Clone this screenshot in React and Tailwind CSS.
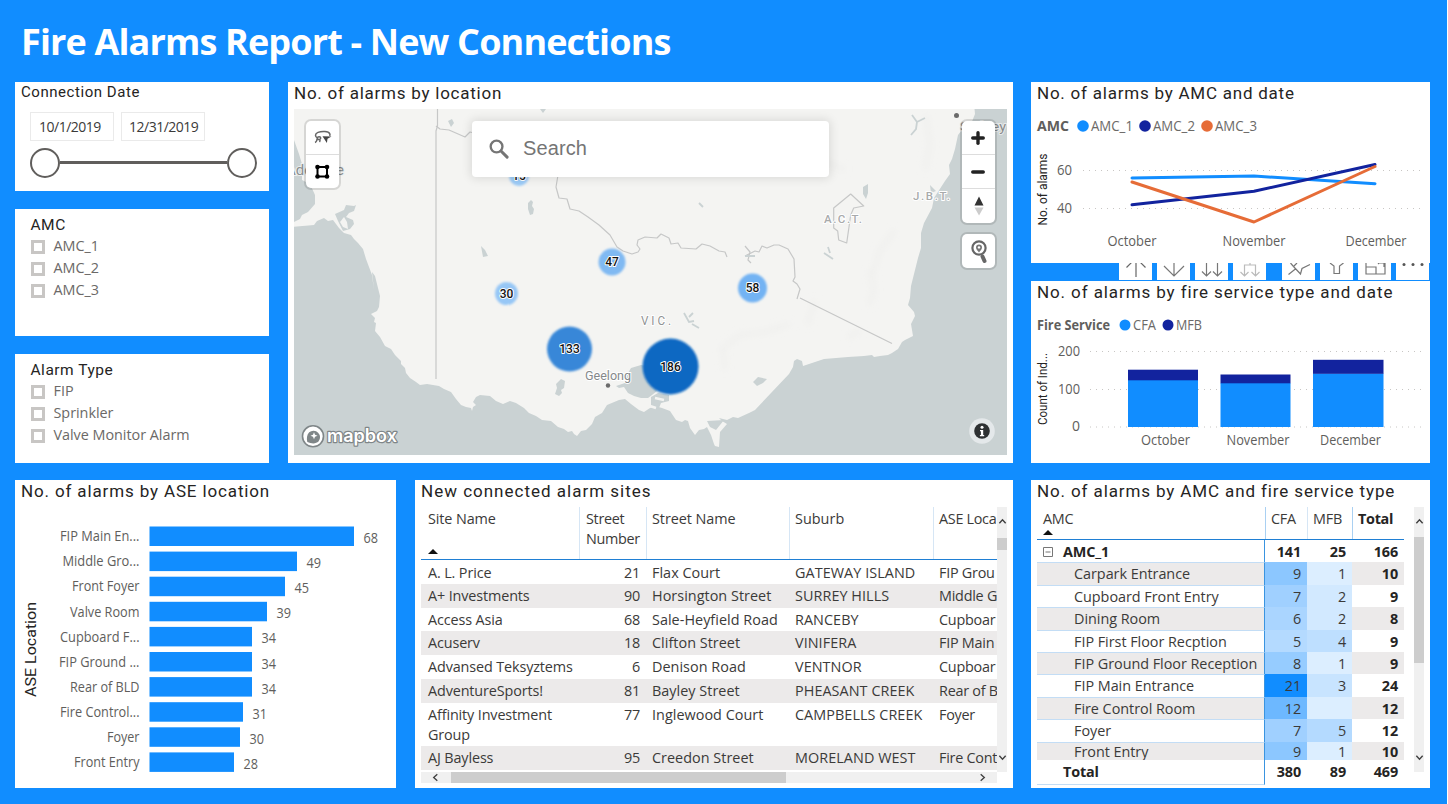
import React from "react";
import { Plus, Minus } from "lucide-react";

const UI = "font-['Open_Sans','Noto_Sans',sans-serif]";
const DIN = "font-[Roboto,sans-serif]";

// Text inside a drawing, fitted to width w when given
function T({ x, y, w, size = 14, fill = "#605e5c", anchor = "start", din, className = "", children, ...rest }) {
  return (
    <text
      x={x}
      y={y}
      fontSize={size}
      fill={fill}
      textAnchor={anchor}
      textLength={w}
      lengthAdjust="spacingAndGlyphs"
      className={`${din ? DIN : UI} ${className}`}
      {...rest}
    >
      {children}
    </text>
  );
}

function Panel({ className = "", children }) {
  return <section className={`bg-white overflow-hidden shrink-0 ${className}`}>{children}</section>;
}

function Title({ className = "", children }) {
  return (
    <h2 className={`${DIN} text-[17px] leading-[22px] text-[#252423] whitespace-nowrap pl-1.5 ${className}`}>
      {children}
    </h2>
  );
}

function CheckList({ title, items }) {
  return (
    <div className="pl-[15.500px] pt-[5px]">
      <h3 className={`${DIN} text-[15.5px] leading-[22px] tracking-[0.5px] text-[#252423]`}>{title}</h3>
      {items.map((t) => (
        <label key={t} className="flex items-center gap-[9px] h-[22px]">
          <span className="size-[14px] border-[3px] border-[#c8c6c4] bg-white" />
          <span className={`${UI} text-[14.4px] tracking-[-0.03px] text-[#6b6967] leading-none`}>{t}</span>
        </label>
      ))}
    </div>
  );
}

function DateSlicer() {
  return (
    <>
      <h2 className={`${DIN} text-[15px] leading-[20px] tracking-[0.55px] text-[#252423] pl-1.5`}>Connection Date</h2>
      <div className={`${UI} flex gap-[7px] pl-[15px] pt-[10px] text-[14px] text-[#3b3a39] tracking-[-0.5px]`}>
        <span className="w-[84px] h-[29px] border border-[#eaeaea] flex items-center pl-[8px]">10/1/2019</span>
        <span className="w-[84px] h-[29px] border border-[#eaeaea] flex items-center pl-[7px]">12/31/2019</span>
      </div>
      <div className="flex items-center pl-[15px] pt-[7px]">
        <span className="size-[30px] rounded-full border-2 border-[#605e5c]" />
        <span className="w-[167px] h-[3px] bg-[#605e5c]" />
        <span className="size-[30px] rounded-full border-2 border-[#605e5c]" />
      </div>
    </>
  );
}

const clusters = [
  { x: 519, y: 176, r: 10, c: "#9ccbf7", n: "15" },
  { x: 612, y: 262, r: 13.5, c: "#80b9f2", n: "47" },
  { x: 506.5, y: 293.5, r: 11.5, c: "#97c7f6", n: "30" },
  { x: 752.5, y: 288, r: 14.5, c: "#73b3f3", n: "58" },
  { x: 569.5, y: 349, r: 22.5, c: "#3787d8", n: "133" },
  { x: 670.5, y: 366.5, r: 28, c: "#0c68c2", n: "186" },
];

function MapDrawing() {
  return (
    <svg viewBox="294 109 713 346" className="block w-[713px] h-[346px]">
      <defs>
        <filter id="soft" x="-30%" y="-30%" width="160%" height="160%">
          <feGaussianBlur stdDeviation="1.2" />
        </filter>
        <filter id="relief" x="-50%" y="-50%" width="200%" height="200%">
          <feGaussianBlur stdDeviation="3" />
        </filter>
      </defs>
      <rect x="294" y="109" width="713" height="346" fill="#f4f4f2" />
      <g fill="none" stroke="#efefed" strokeWidth="4" filter="url(#relief)">
        <path d="M720 350l20-15 25-3 25-8M815 300l-8 25M860 330l-12 8M870 270l4 20-5 15M895 230l-15 20-8 25M725 370l-2-20M925 170l5-25-4-30M800 150l45 20" />
      </g>
      <g fill="#cad2d3">
        <path d="M294 226.700L314 225l3-4 7-3 4 3 5-1 6 8 5 5 7 2 3 4 4 4 5 6 3 10 6 16 2 15-2-18 3 4 4 16 1 4-1 11-2 4-6 3 4 4-1 4 2 1-1 8 5 6 5 9 6 3 4 6 6 6 0 3 4 4 1 5 4 5 6 4 4 3 7-1 12 2 5 3 7 3 5 7 5 6 5 2 5 1 1 3 1-4 3-2-3-3 3-5 4-2 10 1 6 5 7 3 7-3 6 2 8 5 5 5 7 3 6 4 9 1 7 6 6 2 4 3 4-1 2 3 3 2 4-5 5-1 6-6 3-7 7-4 5-8 12-5 6-1 6 5 8 6 5 2 6-4 5-2 7 2 8 3 6 9 6 2 3-2 3 1 2 7 5 7 4-5 5-1 3-2 4 8 3 9 1 2 4 1 1-15 7-8-5-3-3-3 8 2 6-3 5 1 11-5 6-3 34-36 4-7 1-6 3-2 5 2 1 5 21-7 12-1 12-1 16-1 8-1 2 2 6-1 8-1 4-2 6-4 4-7 3-2 6-3 2-1-2-12 4-8-1-4-6-7 2-7 1-12 4-16 3-12 3-10 0-15 3-10 8-15 2-10 11-17 5-7-1-9 3-6 3-10 3-14 7-9 6-2 4-10-1-11H1007V455H294Z" />
        <path d="M294 140l5 14 3 10 0 16 8 4 5 11 0 9-7 8-6 3-2 4-6 3Z" />
        <path d="M335 214l9-4 2-5 8 1 2-1-2 6-5 2-3 4 7 3 1 4-4 5-7 2-5-10Z" />
        <path d="M616 386l9-3 2-8 4-7 10-3 6 1 4 8 6 17-5 4-4 3-7 0-7-2-6-3-4-6-5 1Z" />
        <path d="M651 397l7-4 11 2 0 6-8 2-2 5-8-1Z" />
        <path d="M753 382l5-5 9 2-4 4-6 3ZM707 421l17-1-8 10-6-3ZM931 193l-1-8 6 6Z" />
        <path d="M556 384l5-5 4 2-1 7-3 2 1 3-3 3-4-2 2-6ZM528 203l3-3 2 2-1 4 2 3-1 5-3 1-2-6ZM481 246l4 4 3 6-5 1ZM448 121l4-2 2 4-3 4ZM540 109h6l-3 4ZM863 187l5-3 0 9-2 6-3-5Z" />
      </g>
      <path d="M340 222l4-5 3 5 1 7-5-2Z" fill="#f4f4f2" />
      <path d="M655 398l9 2M650 406l6 2" stroke="#f4f4f2" strokeWidth="2.500" fill="none" />
      <g fill="none" stroke="#c6c7c7" strokeWidth="1.200" strokeLinejoin="round">
        <path d="M437.500 109v17l-1.500 5V379" />
        <path d="M436 126l4 3 9 1 16 7 5-5 4 1 10-3M558 175l-2 12 3 11 8 1 3 10 9 2 9 6 11 8 11 10 7 12 6 4 9 3 6-2 2-3-3-4 1-5 7-3 12 1 4-4 8 4 2 6 7-1 3 5 15 1 6-5 8 2 9 5 6 1 2 5M745 256l10-5 4 1 3-6 5 2 7-3 5 0 9 4 6 10 1 18-2 4 4 3 3 5-3 10" />
        <path d="M800 298L892 343.500M745 246l5 6-2 8 3 3M850.700 194l13 12-10 2-3 7-4 28-8-3-1-9-4-3 0-20Z" />
      </g>
      <g fill="none" stroke="#cad2d3" strokeWidth="1.800">
        <path d="M912 115l5 7-1 7-5 6M917 122l8-4M824 253l9 6M828 247l2 6M684 313l5 9 5-1M689 317l4-4M692 324l7 4M699 203l4 4M745 256h10" />
      </g>
      <g>
        <T din x={286} y={175} w={58} size={14} fill="#8b8f91" stroke="#eef0ef" strokeWidth="2" paintOrder="stroke">Adelaide</T>
        <T din x={960} y={131} w={46} size={13.5} fill="#86898b" stroke="#e6e9e9" strokeWidth="2" paintOrder="stroke">Sydney</T>
        <T din x={585} y={380} w={46} size={13} fill="#85898b" stroke="#fff" strokeWidth="2" paintOrder="stroke">Geelong</T>
        <T din x={641} y={325} w={30} size={13} fill="#8f9293" stroke="#fff" strokeWidth="2" paintOrder="stroke">V I C .</T>
        <g fill="#a8aaab" stroke="#fff" strokeWidth="2" paintOrder="stroke" fontSize="11.500" className={`${DIN} font-medium`}>
          <text x="824" y="223" textLength="38">A.C.T.</text>
          <text x="913" y="200" textLength="37">J.B.T.</text>
        </g>
      </g>
      <circle cx="956.500" cy="115.500" r="2.500" fill="#6b6b6b" />
      <circle cx="608" cy="385.500" r="2.200" fill="#6b6b6b" />
      {clusters.map((c) => (
        <g key={c.n}>
          <circle cx={c.x} cy={c.y} r={c.r} fill={c.c} filter="url(#soft)" />
          <T din x={c.x} y={c.y + 4.4} size={12.5} w={c.n.length * 6.8} anchor="middle" fill="#111" stroke="#fff" strokeWidth="2" strokeLinejoin="round" paintOrder="stroke" className="font-medium">
            {c.n}
          </T>
        </g>
      ))}
      <g>
        <circle cx="313" cy="436.300" r="10.500" fill="#fff" stroke="#7f8688" strokeWidth="1.600" />
        <path d="M307.300 442c-.8-3.500-.5-7.400 1.900-9.700a6.600 6.600 0 0 1 9.300 9.300c-2.400 2.400-7.200 2.200-11.200.4Z" fill="#7f8688" />
        <path d="M314 432.200l1 2.500 2.500 1-2.500 1-1 2.500-1-2.500-2.500-1 2.500-1Z" fill="#fff" />
        <text x="327" y="441.500" fontSize="18" fontWeight="600" fill="#fff" stroke="#7f8688" strokeWidth="2.400" strokeLinejoin="round" paintOrder="stroke" textLength="70" lengthAdjust="spacingAndGlyphs" className="font-[Inter,sans-serif]">
          mapbox
        </text>
      </g>
    </svg>
  );
}

const ctl = "absolute bg-white rounded-[5px] shadow-[0_0_0_2px_rgba(0,0,0,0.12)] flex flex-col";

function MapPanel() {
  return (
    <Panel className="w-[725px] h-[381px]">
      <Title className="h-[27px] tracking-[0.76px]">No. of alarms by location</Title>
      <div className="relative ml-1.5 w-[713px] h-[346px] overflow-hidden">
        <MapDrawing />
        <div className={`${ctl} left-[11.5px] top-[12.5px] w-[33px] h-[67px]`}>
          <svg viewBox="0 0 33 33" className="h-[34px] border-b border-[#ddd]">
            <g fill="none" stroke="#666" strokeWidth="1.500">
              <path d="M11.500 17c-2.500-1-3-4.300.5-5.600 4-1.500 10.500-1.200 11.700 1.200.4.900.4 1.700 0 2.400M9 21.500c1.500-.5 2-2.200 2.300-4.500.4-1.800 3.400-1.500 3.400 0 0 1.300-1.800 2-3.400 1M13.500 18.500c.8 1 .5 2 0 2.500" />
            </g>
            <path d="M16.500 15.300l9 .2-4 2.300-.6 4.200Z" fill="#444" />
          </svg>
          <svg viewBox="0 0 33 33" className="h-[33px]">
            <rect x="11.500" y="12" width="9.500" height="9.500" fill="none" stroke="#000" strokeWidth="2" />
            <g fill="#000">
              <circle cx="11.500" cy="12" r="2.300" />
              <circle cx="21" cy="12" r="2.300" />
              <circle cx="11.500" cy="21.500" r="2.300" />
              <circle cx="21" cy="21.500" r="2.300" />
            </g>
          </svg>
        </div>
        <div className="absolute left-[178px] top-[12px] w-[357px] h-[56px] bg-white rounded shadow-[0_0_10px_2px_rgba(0,0,0,0.1)] flex items-center">
          <svg viewBox="0 0 18 18" className="size-[20px] ml-[17px] text-[#757575]">
            <circle cx="6.800" cy="6.800" r="5.300" fill="none" stroke="currentColor" strokeWidth="2.100" />
            <path d="M10.800 10.800l5.500 5.500" stroke="currentColor" strokeWidth="2.700" strokeLinecap="round" />
          </svg>
          <span className="ml-[14px] pb-[2px] font-['Liberation_Sans',sans-serif] text-[20px] tracking-[0.1px] text-[#757575]">Search</span>
        </div>
        <div className={`${ctl} left-[667.5px] top-[12.5px] w-[33px] h-[102px]`}>
          <span className="h-[34px] border-b border-[#ddd] flex items-center justify-center">
            <Plus size={18} strokeWidth={4.5} className="text-[#222]" />
          </span>
          <span className="h-[34px] border-b border-[#ddd] flex items-center justify-center">
            <Minus size={18} strokeWidth={4.5} className="text-[#222]" />
          </span>
          <svg viewBox="0 0 33 34" className="h-[34px]">
            <path d="M12.500 16.500l4.500-9 4.500 9Z" fill="#333" />
            <path d="M12.500 18.500l4.500 8 4.500-8Z" fill="#ccc" />
          </svg>
        </div>
        <div className={`${ctl} left-[667.5px] top-[125px] w-[33px] h-[34px]`}>
          <svg viewBox="0 0 33 34" className="h-[34px]">
            <circle cx="17" cy="14" r="6.600" fill="none" stroke="#666" strokeWidth="2.200" />
            <path d="M20.500 22.500l2 4.500" stroke="#666" strokeWidth="4" strokeLinecap="round" />
            <path d="M17 18.500c-1.500-2-3-3.300-3-5a3 3 0 0 1 6 0c0 1.700-1.500 3-3 5Z" fill="#777" />
            <circle cx="17" cy="13.400" r="1.200" fill="#fff" />
          </svg>
        </div>
        <svg viewBox="0 0 26 26" className="absolute left-[674.500px] top-[309px] size-[26px]">
          <circle cx="13" cy="13" r="12.800" fill="#e4e8ea" />
          <circle cx="13" cy="13" r="7.800" fill="#2e3133" />
          <circle cx="13" cy="9.300" r="1.500" fill="#fff" />
          <path d="M11 12h3.200v5h1v1.300h-4.300v-1.300h1v-3.700H11Z" fill="#fff" />
        </svg>
      </div>
    </Panel>
  );
}

const dots = { stroke: "#c8c6c4", strokeWidth: 1, strokeDasharray: "1 5" };

function LineChart() {
  return (
    <svg viewBox="1031 104 399 159" className="block w-[399px] h-[159px]">
      <T x={1037} y={131} w={32} size={13.5} className="font-bold">AMC</T>
      <circle cx="1083" cy="126" r="5.800" fill="#118dff" />
      <T x={1091} y={131} w={42} fill="#6b6967">AMC_1</T>
      <circle cx="1145" cy="126" r="5.800" fill="#12239e" />
      <T x={1153} y={131} w={42} fill="#6b6967">AMC_2</T>
      <circle cx="1207" cy="126" r="5.800" fill="#e66c37" />
      <T x={1215} y={131} w={42} fill="#6b6967">AMC_3</T>
      <T din size={12} w={72} fill="#252423" anchor="middle" transform="translate(1047 189.500) rotate(-90)">No. of alarms</T>
      <T x={1057} y={175} w={15}>60</T>
      <T x={1057} y={213} w={15}>40</T>
      <path d="M1083 170.500H1424M1083 208.500H1424" {...dots} />
      <g fill="none" strokeWidth="3" strokeLinecap="round" strokeLinejoin="round">
        <path d="M1132 178l122-2 121 7.700" stroke="#118dff" />
        <path d="M1132 204.800l122-13.600 121-26.700" stroke="#12239e" />
        <path d="M1132 182l122 40 121-55.500" stroke="#e66c37" />
      </g>
      <T x={1107.500} y={246} w={49}>October</T>
      <T x={1222.500} y={246} w={63}>November</T>
      <T x={1345.500} y={246} w={61}>December</T>
    </svg>
  );
}

const toolIcons = [
  { g: "ml-0", c: "#666", d: "M17 0v14M7.500 4.500L17-5l9.500 9.500" },
  { g: "ml-[5px]", c: "#777", d: "M17 0v12M7 3l10 10L27 3" },
  { g: "ml-[5px]", c: "#777", d: "M11.500 0v13M22.500 0v13M7 8.500l4.500 4.500 4.500-4.500M18 8.500l4.500 4.500 4.500-4.500" },
  { g: "ml-[5px]", c: "#bbb", d: "M11.500 13V2h11v11M17 2v-4M7.500 9l4 4 4-4M18.500 9l4 4 4-4" },
  { g: "ml-[16px]", c: "#777", d: "M6.500 11.500l7.500-6M8.500 0l3 3.500 7 7.500 1.500-5.500 8-4M15 0l-3 3" },
  { g: "ml-[5px]", c: "#777", d: "M10 0l4 3v7.500h5.500V3l4-3" },
  { g: "ml-[5px]", c: "#777", d: "M8 0v11h19V0M8 4h10v7M20 1l3-3M21 0h5v4" },
  { g: "ml-[5px]", c: "#555", dots: true },
];

function Toolbar() {
  return (
    <div className="flex h-[16.500px] pl-[88px] overflow-hidden">
      {toolIcons.map((t, i) => (
        <span key={i} className={`w-[33px] h-[16.5px] bg-white shrink-0 ${t.g}`}>
          <svg viewBox="0 0 33 16.500" className="w-[33px] h-[16.500px]">
            {t.dots ? (
              <g fill={t.c}>
                <circle cx="8" cy="1.500" r="1.500" />
                <circle cx="17" cy="1.500" r="1.500" />
                <circle cx="26" cy="1.500" r="1.500" />
              </g>
            ) : (
              <path d={t.d} fill="none" stroke={t.c} strokeWidth="1.200" />
            )}
          </svg>
        </span>
      ))}
    </div>
  );
}

function StackedChart() {
  return (
    <svg viewBox="1031 303 399 159" className="block w-[399px] h-[159px]">
      <T x={1037} y={330} w={73} size={13.5} className="font-bold">Fire Service</T>
      <circle cx="1125" cy="325" r="5.500" fill="#118dff" />
      <T x={1133} y={330} w={23} fill="#6b6967">CFA</T>
      <circle cx="1168" cy="325" r="5.500" fill="#12239e" />
      <T x={1176} y={330} w={26} fill="#6b6967">MFB</T>
      <T din size={12} w={72} fill="#252423" anchor="middle" transform="translate(1047 389) rotate(-90)">Count of Ind...</T>
      <T x={1058} y={356} w={22}>200</T>
      <T x={1058} y={394} w={22}>100</T>
      <T x={1072} y={431} w={8}>0</T>
      <path d="M1090 351.500H1424M1090 389.500H1424M1090 427H1424" {...dots} />
      <g fill="#118dff">
        <rect x="1128" y="380" width="70" height="47" />
        <rect x="1220.500" y="383" width="70" height="44" />
        <rect x="1313" y="373.500" width="70.500" height="53.500" />
      </g>
      <g fill="#12239e">
        <rect x="1128" y="369.700" width="70" height="10.600" />
        <rect x="1220.500" y="374.500" width="70" height="8.800" />
        <rect x="1313" y="359.800" width="70.500" height="14" />
      </g>
      <T x={1141} y={445} w={49}>October</T>
      <T x={1226.500} y={445} w={63}>November</T>
      <T x={1320} y={445} w={61}>December</T>
    </svg>
  );
}

const aseBars = [
  ["FIP Main En...", 60, 204.500, 68],
  ["Middle Gro...", 62.500, 147.500, 49],
  ["Front Foyer", 72, 135.500, 45],
  ["Valve Room", 70, 117.500, 39],
  ["Cupboard F...", 60, 102.500, 34],
  ["FIP Ground ...", 59, 102.500, 34],
  ["Rear of BLD", 70, 102.500, 34],
  ["Fire Control...", 60, 93.500, 31],
  ["Foyer", 107, 90.500, 30],
  ["Front Entry", 74, 84.500, 28],
];

function AseChart() {
  return (
    <svg viewBox="15 503 381 284" className="block w-[381px] h-[284px]">
      <T din size={15.5} w={95} fill="#252423" anchor="middle" transform="translate(36 649.500) rotate(-90)">ASE Location</T>
      {aseBars.map(([label, x, w, n], i) => {
        const y = 526.5 + i * 25.1;
        return (
          <g key={label}>
            <T x={x} y={y + 14.7} w={139.500 - x}>{label}</T>
            <rect x="149.500" y={y} width={w} height="19.500" fill="#118dff" />
            <T x={149.5 + w + 9.5} y={y + 16.5} w={14.500}>{n}</T>
          </g>
        );
      })}
    </svg>
  );
}

const sites = [
  ["A. L. Price", "21", "Flax Court", "GATEWAY ISLAND", "FIP Grou"],
  ["A+ Investments", "90", "Horsington Street", "SURREY HILLS", "Middle G"],
  ["Access Asia", "68", "Sale-Heyfield Road", "RANCEBY", "Cupboar"],
  ["Acuserv", "18", "Clifton Street", "VINIFERA", "FIP Main"],
  ["Advansed Teksyztems", "6", "Denison Road", "VENTNOR", "Cupboar"],
  ["AdventureSports!", "81", "Bayley Street", "PHEASANT CREEK", "Rear of B"],
  ["Affinity Investment Group", "77", "Inglewood Court", "CAMPBELLS CREEK", "Foyer"],
  ["AJ Bayless", "95", "Creedon Street", "MORELAND WEST", "Fire Cont"],
];

const siteCols = "grid grid-cols-[158px_67px_143px_144px_64px]";

function Chevron({ d, className = "" }) {
  return (
    <svg viewBox="0 0 10 10" className={`size-[9px] ${className}`}>
      <path d={d} fill="none" stroke="#404040" strokeWidth="1.500" />
    </svg>
  );
}

const UP = "M1.500 7L5 3l3.500 4";
const DOWN = "M1.500 3L5 7l3.500-4";
const LEFT = "M7 1.500L3 5l4 3.500";
const RIGHT = "M3 1.500L7 5 3 8.500";

function SortMark() {
  return (
    <svg viewBox="0 0 10 5" className="w-[10px] h-[5px]">
      <path d="M0 5L5 0l5 5Z" fill="#111" />
    </svg>
  );
}

function SitesTable() {
  return (
    <div className={`${UI} pl-1.5 text-[14.4px] tracking-[0.03px] leading-[20px] text-[#3b3a39]`}>
      <div className="flex">
        <div className="w-[576px] h-[263px] overflow-hidden">
          <div className={`${siteCols} h-[53px] border-b border-b-[#1f7fd4]`}>
            <div className="pl-[7px] pt-[2px] flex flex-col justify-between pb-[5px] tracking-[-0.1px]">
              Site Name
              <SortMark />
            </div>
            <div className="border-l border-l-[#d6e6f5] pl-1.5 pt-[2px] tracking-[-0.3px]">Street Number</div>
            <div className="border-l border-l-[#d6e6f5] pl-[5px] pt-[2px] tracking-[-0.05px]">Street Name</div>
            <div className="border-l border-l-[#d6e6f5] pl-[5px] pt-[2px]">Suburb</div>
            <div className="border-l border-l-[#d6e6f5] pl-[5px] pt-[2px] whitespace-nowrap overflow-hidden tracking-[-0.3px]">ASE Loca</div>
          </div>
          {sites.map((r, i) => (
            <div
              key={r[0]}
              className={`${siteCols} ${i === 0 ? "pt-[3px]" : "pt-[2px]"} ${i === 6 ? "h-[43px]" : "h-[23.8px]"} ${i % 2 ? "bg-[#eceaea]" : "bg-white"}`}
            >
              <div className={`pl-[7px] tracking-[-0.13px] ${i === 6 ? "pr-6" : "whitespace-nowrap"}`}>{r[0]}</div>
              <div className="text-right pr-1.5 tracking-[-0.25px]">{r[1]}</div>
              <div className="pl-1.5 whitespace-nowrap">{r[2]}</div>
              <div className="pl-1.5 whitespace-nowrap tracking-[0.06px]">{r[3]}</div>
              <div className="pl-1.5 whitespace-nowrap tracking-[-0.25px] overflow-hidden">{r[4]}</div>
            </div>
          ))}
        </div>
        <div className="w-[10px] h-[265px] bg-[#f0f0f0] flex flex-col items-center">
          <Chevron d={UP} className="mt-[10px]" />
          <span className="w-[10px] h-[12px] bg-[#cdcdcd] mt-[12px]" />
          <Chevron d={DOWN} className="mt-auto mb-[10px]" />
        </div>
      </div>
      <div className="w-[576px] h-[10.500px] bg-[#f0f0f0] flex items-center">
        <Chevron d={LEFT} className="ml-[10px]" />
        <span className="ml-[11px] w-[335px] h-full bg-[#cdcdcd]" />
        <Chevron d={RIGHT} className="ml-auto mr-[10px]" />
      </div>
    </div>
  );
}

const matrix = [
  ["Carpark Entrance", "9", "bg-[#8cc7ff]", "1", "bg-[#dceeff]", "10"],
  ["Cupboard Front Entry", "7", "bg-[#a0d0ff]", "2", "bg-[#d2e9ff]", "9"],
  ["Dining Room", "6", "bg-[#aad5ff]", "2", "bg-[#d2e9ff]", "8"],
  ["FIP First Floor Recption", "5", "bg-[#b4daff]", "4", "bg-[#bedfff]", "9"],
  ["FIP Ground Floor Reception", "8", "bg-[#96ccff]", "1", "bg-[#dceeff]", "9"],
  ["FIP Main Entrance", "21", "bg-[#118dff]", "3", "bg-[#c8e4ff]", "24"],
  ["Fire Control Room", "12", "bg-[#6db8ff]", "", "bg-[#dceeff]", "12"],
  ["Foyer", "7", "bg-[#a0d0ff]", "5", "bg-[#b4daff]", "12"],
  ["Front Entry", "9", "bg-[#8cc7ff]", "1", "bg-[#dceeff]", "10"],
];

const mxCols = "grid grid-cols-[228px_42px_45px_52px]";

function Matrix() {
  return (
    <div className={`${UI} flex pl-1.5 text-[14.4px] tracking-[-0.15px] leading-[22px] text-[#3b3a39]`}>
      <div className="w-[367px]">
        <div className={`${mxCols} h-[33px] border-b border-b-[#1f7fd4]`}>
          <div className="pl-[6px] pt-[1px] flex flex-col justify-between pb-[4px] tracking-[-0.3px]">
            AMC
            <SortMark />
          </div>
          <div className="border-l border-l-[#a9d0f2] pt-[1px] pl-[5px] tracking-[-0.3px]">CFA</div>
          <div className="border-l border-l-[#d6e6f5] pt-[1px] pl-[5px]">MFB</div>
          <div className="border-l border-l-[#a9d0f2] pt-[1px] pl-[5px] font-bold text-[#252423] tracking-[-0.3px]">Total</div>
        </div>
        <div className="h-[219.500px] overflow-hidden">
          <div className={`${mxCols} h-[22.4px] leading-[24px] font-bold text-[#252423]`}>
            <div className="flex items-center pl-[6px] border-r border-r-[#3a94e0]">
              <svg viewBox="0 0 10 10" className="size-[10px] mr-[10px]">
                <path d="M.5.5h9v9h-9ZM2.500 5h5" fill="none" stroke="#777" />
              </svg>
              AMC_1
            </div>
            <div className="text-right pr-1.5">141</div>
            <div className="text-right pr-1.5">25</div>
            <div className="text-right pr-1.5">166</div>
          </div>
          {matrix.map((r, i) => (
            <div key={r[0]} className={`${mxCols} h-[22.4px] ${i === 8 ? "leading-[20px]" : "leading-[23px]"} ${i % 2 ? "bg-white" : "bg-[#eceaea]"}`}>
              <div className="border-r border-r-[#3a94e0] border-t border-t-[#c3ddf5]">
                <div className="-mt-px pl-[37px] whitespace-nowrap tracking-[-0.03px]">{r[0]}</div>
              </div>
              <div className={`text-right pr-1.5 ${r[2]}`}>{r[1]}</div>
              <div className={`text-right pr-1.5 ${r[4]}`}>{r[3]}</div>
              <div className="text-right pr-1.5 font-bold text-[#252423]">{r[5]}</div>
            </div>
          ))}
        </div>
        <div className={`${mxCols} h-[23px] font-bold text-[#252423] leading-[24px]`}>
          <div className="pl-[26px] border-r border-r-[#3a94e0] border-b border-b-[#c3ddf5]">Total</div>
          <div className="text-right pr-1.5">380</div>
          <div className="text-right pr-1.5">89</div>
          <div className="text-right pr-1.5">469</div>
        </div>
      </div>
      <div className="ml-[10px] w-[10px] h-[265px] bg-[#f0f0f0] flex flex-col items-center">
        <Chevron d={UP} className="mt-[10px] shrink-0" />
        <span className="w-[10px] h-[126px] bg-[#cdcdcd] mt-[11px]" />
        <Chevron d={DOWN} className="mt-auto mb-[10px]" />
      </div>
    </div>
  );
}

export default function App() {
  return (
    <div className="w-[1448px] h-[804px] bg-[#118dff] overflow-hidden border-r border-white pl-[15px]">
      <header className="h-[81.500px] pl-[6px] pt-[15px]">
        <h1 className={`${UI} font-bold text-[36px] leading-[54px] tracking-[-0.85px] text-white whitespace-nowrap`}>
          Fire Alarms Report - New Connections
        </h1>
      </header>
      <div className="flex h-[381px]">
        <div className="w-[254px] mr-[19px] flex flex-col justify-between">
          <Panel className="h-[109px]">
            <DateSlicer />
          </Panel>
          <Panel className="h-[127px]">
            <CheckList title="AMC" items={["AMC_1", "AMC_2", "AMC_3"]} />
          </Panel>
          <Panel className="h-[109px]">
            <CheckList title="Alarm Type" items={["FIP", "Sprinkler", "Valve Monitor Alarm"]} />
          </Panel>
        </div>
        <MapPanel />
        <div className="w-[399px] ml-[18px] flex flex-col">
          <Panel className="h-[181.500px]">
            <Title className="tracking-[0.77px]">No. of alarms by AMC and date</Title>
            <LineChart />
          </Panel>
          <Toolbar />
          <Panel className="h-[182px] mt-[1px]">
            <Title className="tracking-[0.9px]">No. of alarms by fire service type and date</Title>
            <StackedChart />
          </Panel>
        </div>
      </div>
      <div className="flex mt-[17.500px] h-[307.500px]">
        <Panel className="w-[381px] mr-[19px]">
          <Title className="h-[23px] tracking-[0.86px]">No. of alarms by ASE location</Title>
          <AseChart />
        </Panel>
        <Panel className="w-[598px] mr-[18px]">
          <Title className="h-[27px] tracking-[1px]">New connected alarm sites</Title>
          <SitesTable />
        </Panel>
        <Panel className="w-[399px]">
          <Title className="h-[27px] tracking-[0.88px]">No. of alarms by AMC and fire service type</Title>
          <Matrix />
        </Panel>
      </div>
    </div>
  );
}
